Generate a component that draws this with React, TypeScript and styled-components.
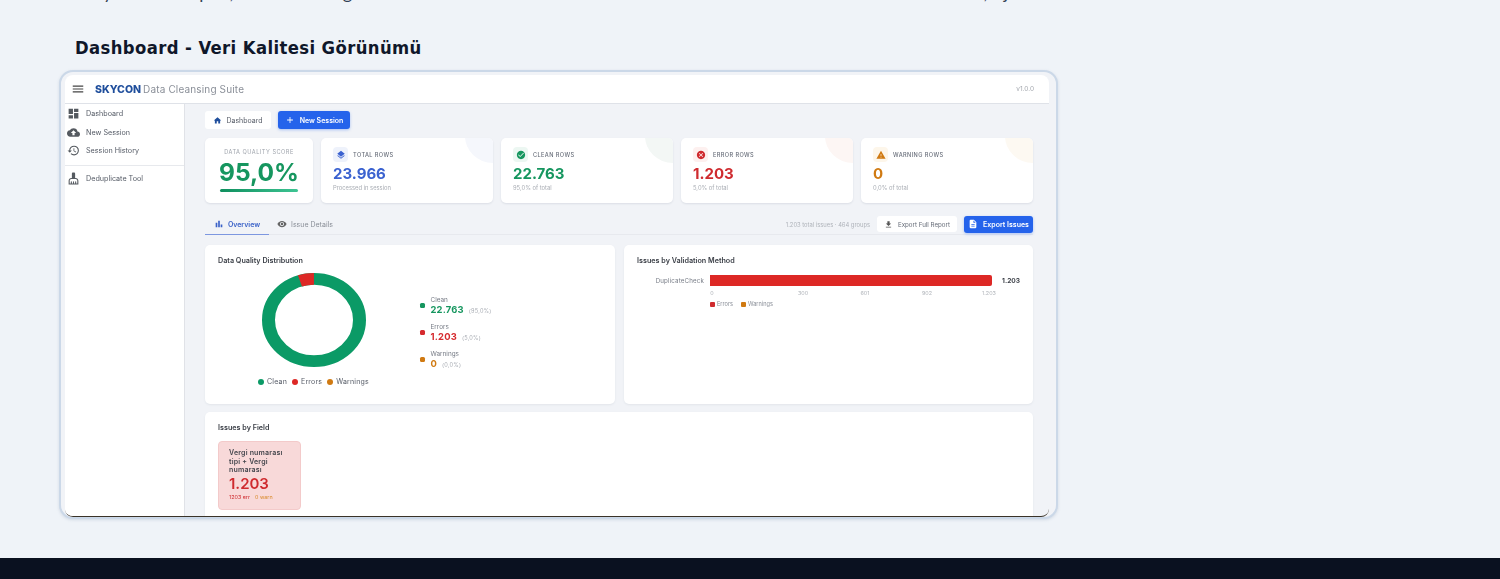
import styled, { createGlobalStyle } from 'styled-components';
import {
  MdAdd,
  MdBarChart,
  MdCancel,
  MdCheckCircle,
  MdCleaningServices,
  MdCloudUpload,
  MdDashboard,
  MdDescription,
  MdDownload,
  MdHistory,
  MdHome,
  MdLayers,
  MdMenu,
  MdVisibility,
  MdWarning,
} from 'react-icons/md';

const GlobalStyle = createGlobalStyle`
  html, body {
    margin: 0;
    height: 579px;
    overflow: hidden;
    background: #eff3f8;
  }
  * { box-sizing: border-box; }
`;

const Page = styled.div`
  height: 579px;
  display: flex;
  flex-direction: column;
  overflow: hidden;
  font-family: Lato, "Liberation Sans", sans-serif;
`;

const Article = styled.main`
  height: 558px;
  padding-left: 59px;
  overflow: hidden;
`;

const Paragraph = styled.p`
  margin: -20px 0 0 16px;
  height: 24px;
  font-size: 18px;
  line-height: 24px;
  letter-spacing: 0.9px;
  white-space: nowrap;
  color: #334155;
`;

const Heading = styled.h3`
  margin: 32px 0 0 16px;
  height: 34px;
  font-family: "DejaVu Sans Condensed", "DejaVu Sans", sans-serif;
  font-size: 18.3px;
  line-height: 24px;
  font-weight: 700;
  letter-spacing: 0.4px;
  color: #0f172a;
`;

const Frame = styled.div`
  width: 999px;
  height: 449px;
  border: 2px solid #cbd8e8;
  border-radius: 14px;
  padding: 3px 7px 0 4px;
  background: #f1f3f7;
  overflow: hidden;
  display: flex;
  flex-direction: column;
  box-shadow: 0 1px 3px rgba(120, 140, 170, 0.25);
`;

const Shot = styled.div`
  flex: 1;
  min-height: 0;
  display: flex;
  flex-direction: column;
  overflow: hidden;
  font-family: Inter, "Liberation Sans", sans-serif;
  filter: blur(0.3px);
  border-bottom: 1px solid #3a3328;
  border-radius: 0 0 8px 8px;
`;

const TopBar = styled.header`
  height: 29px;
  flex: none;
  display: flex;
  align-items: center;
  background: #fff;
  border-bottom: 1.5px solid #dfe2e8;
  border-radius: 8px 8px 0 0;
  padding: 0 15px 0 6px;
  color: #444;
  svg { font-size: 14px; margin-right: 10px; }
`;

const Brand = styled.span`
  font-size: 10.5px;
  font-weight: 800;
  color: #1f4e9c;
  margin-right: 2px;
`;

const Suite = styled.span`
  font-size: 10px;
  color: #8a8f98;
  letter-spacing: 0.15px;
`;

const Version = styled.span`
  margin-left: auto;
  font-size: 6.5px;
  color: #a3a7ae;
`;

const Body = styled.div`
  flex: 1;
  min-height: 0;
  display: flex;
`;

const Sidebar = styled.aside`
  width: 120px;
  flex: none;
  background: #fff;
  border-right: 1px solid #e0e2e7;
`;

const NavGroup = styled.nav`
  padding-bottom: 5px;
  & + & {
    border-top: 1px solid #e7e9ed;
    padding-top: 3px;
  }
`;

const NavItem = styled.div`
  height: 18.7px;
  display: flex;
  align-items: center;
  gap: 6px;
  padding-left: 2px;
  font-size: 7.2px;
  color: #555b66;
  svg { font-size: 13px; color: #555a60; flex: none; }
`;

const Content = styled.section`
  flex: 1;
  min-width: 0;
  padding: 7px 16px 0 20px;
`;

const Actions = styled.div`
  display: flex;
  gap: 7px;
  height: 18px;
`;

const Crumb = styled.div`
  width: 66px;
  background: #fff;
  border-radius: 3px;
  display: flex;
  align-items: center;
  justify-content: center;
  gap: 4px;
  font-size: 7px;
  color: #555b66;
  svg { font-size: 9px; color: #1f4e9c; }
`;

const PrimaryButton = styled.div<{ $width: number }>`
  width: ${p => p.$width}px;
  height: 100%;
  background: #2563eb;
  border-radius: 3px;
  display: flex;
  align-items: center;
  justify-content: center;
  gap: 5px;
  font-size: 7px;
  font-weight: 600;
  color: #fff;
  box-shadow: 0 1px 3px rgba(37, 99, 235, 0.35);
  svg { font-size: 10px; }
`;

const StatGrid = styled.div`
  display: grid;
  grid-template-columns: 108px repeat(4, 1fr);
  gap: 8px;
  height: 65px;
  margin-top: 9px;
`;

const Card = styled.div`
  position: relative;
  overflow: hidden;
  background: #fff;
  border-radius: 5px;
  box-shadow: 0 1px 2px rgba(120, 130, 150, 0.18);
`;

const ScoreCard = styled(Card)`
  display: flex;
  flex-direction: column;
  align-items: center;
  padding-top: 11px;
`;

const ScoreLabel = styled.div`
  font-size: 5.6px;
  letter-spacing: 0.5px;
  color: #9ea3ab;
`;

const ScoreValue = styled.div`
  font-size: 24.5px;
  line-height: 29px;
  margin-top: 3px;
  font-weight: 700;
  color: #16965f;
`;

const ScoreBar = styled.div`
  width: 78px;
  height: 3px;
  margin-top: 2px;
  border-radius: 2px;
  background: linear-gradient(90deg, #0f8f5e, #3ec493);
`;

const StatCard = styled(Card)`
  padding: 9px 11px 0 12px;
`;

const Blob = styled.span<{ $tint: string }>`
  position: absolute;
  top: -29px;
  right: -28px;
  width: 56px;
  height: 54px;
  border-radius: 50%;
  background: ${p => p.$tint};
`;

const StatHead = styled.div`
  display: flex;
  align-items: center;
  gap: 5px;
  height: 15px;
`;

const StatIcon = styled.span<{ $tint: string; $color: string }>`
  width: 15px;
  height: 15px;
  border-radius: 4px;
  background: ${p => p.$tint};
  color: ${p => p.$color};
  display: flex;
  align-items: center;
  justify-content: center;
  svg { font-size: 10px; }
`;

const StatLabel = styled.span`
  font-size: 5.6px;
  font-weight: 500;
  letter-spacing: 0.4px;
  color: #666c78;
`;

const StatValue = styled.div<{ $color: string }>`
  font-size: 15px;
  line-height: 20px;
  margin-top: 2px;
  font-weight: 700;
  color: ${p => p.$color};
`;

const StatNote = styled.div`
  font-size: 5.8px;
  line-height: 8px;
  color: #a9adb4;
`;

const TabRow = styled.div`
  display: flex;
  align-items: center;
  height: 21px;
  margin-top: 11px;
  border-bottom: 1px solid #e7e9ee;
`;

const Tab = styled.div<{ $active?: boolean }>`
  height: 21px;
  width: ${p => (p.$active ? 64 : 72)}px;
  display: flex;
  align-items: center;
  justify-content: center;
  gap: 4px;
  font-size: 7px;
  font-weight: ${p => (p.$active ? 600 : 400)};
  color: ${p => (p.$active ? '#3b62c8' : '#8a8f98')};
  border-bottom: 1px solid ${p => (p.$active ? '#7d97e0' : 'transparent')};
  margin-bottom: -1px;
  svg { font-size: 10px; color: ${p => (p.$active ? '#3b62c8' : '#666')}; }
`;

const TabTools = styled.div`
  margin-left: auto;
  display: flex;
  align-items: center;
  gap: 7px;
  height: 17px;
`;

const ToolNote = styled.span`
  font-size: 5.8px;
  color: #aeb2b9;
`;

const GhostButton = styled.div`
  width: 80px;
  height: 16px;
  background: #fff;
  border-radius: 3px;
  display: flex;
  align-items: center;
  justify-content: center;
  gap: 5px;
  font-size: 6.2px;
  color: #666c78;
  svg { font-size: 9px; color: #555; }
`;

const Panels = styled.div`
  display: grid;
  grid-template-columns: 410px 409px;
  gap: 9px;
  height: 159px;
  margin-top: 10px;
`;

const Panel = styled.div`
  position: relative;
  background: #fff;
  border-radius: 5px;
  padding: 11px 13px 0;
  box-shadow: 0 1px 2px rgba(120, 130, 150, 0.12);
`;

const PanelTitle = styled.div`
  font-size: 7.2px;
  line-height: 9px;
  font-weight: 600;
  color: #3c4048;
`;

const DonutArea = styled.div`
  display: flex;
  margin-top: 8px;
`;

const DonutColumn = styled.div`
  width: 202px;
  display: flex;
  flex-direction: column;
  align-items: center;
  padding-right: 11px;
`;

const ChartLegend = styled.div`
  display: flex;
  gap: 5px;
  margin-top: 10px;
  font-size: 7px;
  letter-spacing: 0.2px;
  color: #555b66;
`;

const LegendEntry = styled.span<{ $color: string }>`
  display: flex;
  align-items: center;
  gap: 3px;
  &::before {
    content: '';
    width: 6px;
    height: 6px;
    border-radius: 50%;
    background: ${p => p.$color};
  }
`;

const Breakdown = styled.div`
  padding-top: 23px;
  display: flex;
  flex-direction: column;
  gap: 6px;
`;

const BreakdownRow = styled.div<{ $color: string }>`
  position: relative;
  padding-left: 10.5px;
  height: 21px;
  &::before {
    content: '';
    position: absolute;
    left: 0;
    top: 7px;
    width: 5px;
    height: 5px;
    border-radius: 1.5px;
    background: ${p => p.$color};
  }
`;

const BreakdownLabel = styled.div`
  font-size: 6.4px;
  line-height: 8px;
  color: #777c86;
`;

const BreakdownValue = styled.div<{ $color: string }>`
  display: flex;
  align-items: baseline;
  gap: 5px;
  font-size: 9.4px;
  line-height: 12px;
  font-weight: 700;
  letter-spacing: 0.2px;
  color: ${p => p.$color};
  small {
    font-size: 5.6px;
    font-weight: 400;
    color: #a9adb4;
  }
`;

const BarRow = styled.div`
  display: flex;
  align-items: center;
  margin-top: 10px;
  height: 11px;
`;

const BarName = styled.div`
  width: 67px;
  flex: none;
  text-align: right;
  font-size: 6.2px;
  letter-spacing: 0.15px;
  color: #777c86;
`;

const Bar = styled.div`
  width: 283px;
  height: 11px;
  margin-left: 6px;
  background: #dd2825;
  border-radius: 0 2px 2px 0;
`;

const BarValue = styled.div`
  margin-left: 10px;
  font-size: 6.6px;
  font-weight: 700;
  color: #3c4048;
`;

const Axis = styled.div`
  position: relative;
  height: 10px;
  margin: 3px 0 0 73px;
`;

const Tick = styled.span<{ $at: number }>`
  position: absolute;
  left: ${p => p.$at}px;
  transform: translateX(-50%);
  font-size: 5.4px;
  line-height: 8px;
  color: #b0b4ba;
`;

const BarLegend = styled.div`
  display: flex;
  gap: 8px;
  margin: 2px 0 0 73px;
  font-size: 5.6px;
  line-height: 7px;
  color: #8a8f98;
`;

const BarKey = styled.span<{ $color: string }>`
  display: flex;
  align-items: center;
  gap: 2px;
  &::before {
    content: '';
    width: 5px;
    height: 5px;
    border-radius: 1px;
    background: ${p => p.$color};
  }
`;

const FieldPanel = styled(Panel)`
  margin-top: 8px;
  height: 120px;
`;

const FieldCard = styled.div`
  width: 83px;
  height: 69px;
  margin-top: 9px;
  padding: 7px 8px 0 10px;
  background: #f8d9d9;
  border: 1px solid #f3caca;
  border-radius: 4px;
`;

const FieldName = styled.div`
  font-size: 7px;
  line-height: 8.6px;
  font-weight: 600;
  letter-spacing: 0.2px;
  color: #44464d;
`;

const FieldValue = styled.div`
  font-size: 15px;
  line-height: 18px;
  font-weight: 600;
  color: #cf2b2f;
`;

const FieldMeta = styled.div`
  display: flex;
  gap: 5px;
  font-size: 5.4px;
  line-height: 9px;
  color: #cf2b2f;
  span + span { color: #d98a2b; }
`;

const BottomBar = styled.footer`
  flex: 1;
  background: #0a1120;
`;

const stats = [
  { label: 'TOTAL ROWS', value: '23.966', note: 'Processed in session', color: '#3b62d0', tint: '#eef2fb', blob: '#f5f7fc', icon: <MdLayers /> },
  { label: 'CLEAN ROWS', value: '22.763', note: '95,0% of total', color: '#16965f', tint: '#ecf7f2', blob: '#f3f7f5', icon: <MdCheckCircle /> },
  { label: 'ERROR ROWS', value: '1.203', note: '5,0% of total', color: '#cf2b2f', tint: '#fdf0ef', blob: '#fdf6f4', icon: <MdCancel /> },
  { label: 'WARNING ROWS', value: '0', note: '0,0% of total', color: '#d07a12', tint: '#fdf6ea', blob: '#fdf9f2', icon: <MdWarning /> },
];

const breakdown = [
  { label: 'Clean', value: '22.763', share: '(95,0%)', color: '#16965f' },
  { label: 'Errors', value: '1.203', share: '(5,0%)', color: '#d62a2e' },
  { label: 'Warnings', value: '0', share: '(0,0%)', color: '#d07a12' },
];

const ticks = [
  { text: '0', at: 2 },
  { text: '300', at: 93 },
  { text: '601', at: 155 },
  { text: '902', at: 217 },
  { text: '1.203', at: 279 },
];

function Donut() {
  return (
    <svg width="104" height="94" viewBox="0 0 104 104" preserveAspectRatio="none">
      <circle cx="52" cy="52" r="45.5" fill="none" stroke="#0b9a66" strokeWidth="13" />
      <circle
        cx="52"
        cy="52"
        r="45.5"
        fill="none"
        stroke="#dd2825"
        strokeWidth="13"
        pathLength={100}
        strokeDasharray="5 95"
        transform="rotate(-108 52 52)"
      />
    </svg>
  );
}

export default function App() {
  return (
    <Page>
      <GlobalStyle />
      <Article>
        <Paragraph>
          Bu yönetim kapısı, tüm alanlar genel kalite durumunu tüm ekranda sunar ile kullanıcının ilerlemesini izler, ajan
        </Paragraph>
        <Heading>Dashboard - Veri Kalitesi Görünümü</Heading>
        <Frame>
          <Shot>
            <TopBar>
              <MdMenu />
              <Brand>SKYCON</Brand>
              <Suite>Data Cleansing Suite</Suite>
              <Version>v1.0.0</Version>
            </TopBar>
            <Body>
              <Sidebar>
                <NavGroup>
                  <NavItem><MdDashboard />Dashboard</NavItem>
                  <NavItem><MdCloudUpload />New Session</NavItem>
                  <NavItem><MdHistory />Session History</NavItem>
                </NavGroup>
                <NavGroup>
                  <NavItem><MdCleaningServices />Deduplicate Tool</NavItem>
                </NavGroup>
              </Sidebar>
              <Content>
                <Actions>
                  <Crumb><MdHome />Dashboard</Crumb>
                  <PrimaryButton $width={72}><MdAdd />New Session</PrimaryButton>
                </Actions>
                <StatGrid>
                  <ScoreCard>
                    <ScoreLabel>DATA QUALITY SCORE</ScoreLabel>
                    <ScoreValue>95,0%</ScoreValue>
                    <ScoreBar />
                  </ScoreCard>
                  {stats.map(stat => (
                    <StatCard key={stat.label}>
                      <Blob $tint={stat.blob} />
                      <StatHead>
                        <StatIcon $tint={stat.tint} $color={stat.color}>{stat.icon}</StatIcon>
                        <StatLabel>{stat.label}</StatLabel>
                      </StatHead>
                      <StatValue $color={stat.color}>{stat.value}</StatValue>
                      <StatNote>{stat.note}</StatNote>
                    </StatCard>
                  ))}
                </StatGrid>
                <TabRow>
                  <Tab $active><MdBarChart />Overview</Tab>
                  <Tab><MdVisibility />Issue Details</Tab>
                  <TabTools>
                    <ToolNote>1.203 total issues · 464 groups</ToolNote>
                    <GhostButton><MdDownload />Export Full Report</GhostButton>
                    <PrimaryButton $width={69}><MdDescription />Export Issues</PrimaryButton>
                  </TabTools>
                </TabRow>
                <Panels>
                  <Panel>
                    <PanelTitle>Data Quality Distribution</PanelTitle>
                    <DonutArea>
                      <DonutColumn>
                        <Donut />
                        <ChartLegend>
                          <LegendEntry $color="#0b9a66">Clean</LegendEntry>
                          <LegendEntry $color="#dd2825">Errors</LegendEntry>
                          <LegendEntry $color="#d07a12">Warnings</LegendEntry>
                        </ChartLegend>
                      </DonutColumn>
                      <Breakdown>
                        {breakdown.map(row => (
                          <BreakdownRow key={row.label} $color={row.color}>
                            <BreakdownLabel>{row.label}</BreakdownLabel>
                            <BreakdownValue $color={row.color}>
                              {row.value} <small>{row.share}</small>
                            </BreakdownValue>
                          </BreakdownRow>
                        ))}
                      </Breakdown>
                    </DonutArea>
                  </Panel>
                  <Panel>
                    <PanelTitle>Issues by Validation Method</PanelTitle>
                    <BarRow>
                      <BarName>DuplicateCheck</BarName>
                      <Bar />
                      <BarValue>1.203</BarValue>
                    </BarRow>
                    <Axis>
                      {ticks.map(tick => (
                        <Tick key={tick.text} $at={tick.at}>{tick.text}</Tick>
                      ))}
                    </Axis>
                    <BarLegend>
                      <BarKey $color="#cf2b2f">Errors</BarKey>
                      <BarKey $color="#d07a12">Warnings</BarKey>
                    </BarLegend>
                  </Panel>
                </Panels>
                <FieldPanel>
                  <PanelTitle>Issues by Field</PanelTitle>
                  <FieldCard>
                    <FieldName>Vergi numarası tipi + Vergi numarası</FieldName>
                    <FieldValue>1.203</FieldValue>
                    <FieldMeta>
                      <span>1203 err</span>
                      <span>0 warn</span>
                    </FieldMeta>
                  </FieldCard>
                </FieldPanel>
              </Content>
            </Body>
          </Shot>
        </Frame>
      </Article>
      <BottomBar />
    </Page>
  );
}
